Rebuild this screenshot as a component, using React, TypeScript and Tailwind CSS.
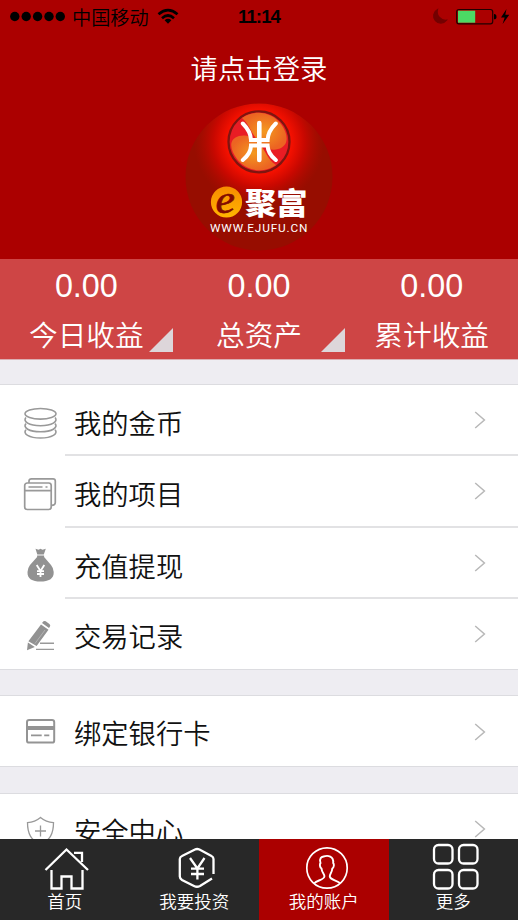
import React from "react";

const FONT = "font-['Liberation_Sans','Noto_Sans_CJK_SC',sans-serif]";

interface MenuItem {
  name: string;
  icon: React.ReactNode;
}

function StatusBar() {
  return (
    <div className="relative flex h-[34px] items-center text-black">
      <svg width="66" height="34" viewBox="0 0 66 34" className="shrink-0">
        {[14.8, 26.2, 37.6, 49, 60.3].map((x) => (
          <circle key={x} cx={x} cy="16.5" r="4.7" />
        ))}
      </svg>
      <span className="ml-[6px] pt-[3px] text-[19.2px] leading-[34px] font-[350]">{"中国移动"}</span>
      <svg width="22" height="34" viewBox="0 0 22 34" className="ml-[8px]" fill="none" stroke="#000" strokeWidth="2.7">
        <path d="M1.5 14.2Q11 6 20.5 14.2M5 18.2Q11 12.8 17 18.2" />
        <path d="M7.6 20.3Q11 17.4 14.4 20.3L11 23.8Z" fill="#000" stroke="none" />
      </svg>
      <span className="absolute inset-x-0 top-0 text-center text-[18.6px] leading-[34px] font-bold tracking-[-0.9px]">
        {"11:14"}
      </span>
      <svg width="88" height="34" viewBox="430 0 88 34" className="ml-auto">
        <path d="M437.5 9.5A7.2 7.2 0 1 0 446.6 20.2A8.5 8.5 0 0 1 437.5 9.5Z" fill="#730000" stroke="#730000" strokeWidth="1.2" />
        <rect x="456.7" y="9.5" width="36" height="14.3" rx="2.3" fill="none" stroke="#210000" strokeWidth="1.2" />
        <rect x="458" y="10.7" width="17.2" height="12" fill="#4cd964" />
        <path d="M494 14Q496.5 14 496.5 16.7Q496.5 19.3 494 19.3Z" />
        <path d="M506.5 9L501 17.4H504.7L502.6 24L509.3 14.8H505.3Z" />
      </svg>
    </div>
  );
}

function Logo() {
  return (
    <svg width="148" height="148" viewBox="0 0 148 148">
      <defs>
        <radialGradient id="glow" gradientUnits="userSpaceOnUse" cx="74" cy="39" r="65">
          <stop offset="0.4" stopColor="#ff1500" />
          <stop offset="0.5" stopColor="#f41000" />
          <stop offset="0.7" stopColor="#c80800" />
          <stop offset="1" stopColor="#b00a00" stopOpacity="0" />
        </radialGradient>
        <radialGradient id="orange">
          <stop offset="0" stopColor="#f49a20" />
          <stop offset="1" stopColor="#ec6422" />
        </radialGradient>
        <linearGradient id="coin" x1="0" y1="0" x2="0" y2="1">
          <stop offset="0" stopColor="#f88c00" />
          <stop offset="1" stopColor="#ffb400" />
        </linearGradient>
        <clipPath id="disc">
          <circle cx="74" cy="74" r="73.5" />
        </clipPath>
      </defs>
      <g clipPath="url(#disc)">
        <rect width="148" height="148" fill="#970d00" />
        <rect width="148" height="148" fill="url(#glow)" />
      </g>
      <circle cx="74" cy="38.8" r="30.5" fill="#e91c24" stroke="#7e1510" strokeWidth="2.3" />
      <path d="M57 15C70 6 87 9 96 21C104 32 104 43 93 46C86 48 80 45 75 40C66 31 65 22 57 15Z" fill="url(#orange)" />
      <path d="M91 62C78 71 61 68 52 56C44 45 44 36 54 33C62 31 69 34 74 40C81 48 82 56 91 62Z" fill="url(#orange)" />
      <g fill="none" stroke="#fff" strokeWidth="4" strokeLinecap="round">
        <path d="M74.300 20V57" strokeWidth="4.600" />
        <path d="M57.800 20.500Q65.800 28.500 66 37H82.600Q82.800 28.500 90.800 20.500" />
        <path d="M57.800 57Q65.800 50.500 66 42.600H82.600Q82.800 50.500 90.800 57" />
      </g>
      <circle cx="41.5" cy="99" r="15.600" fill="url(#coin)" />
      <text
        transform="translate(41 109.500) rotate(-4) scale(1.150 1)"
        textAnchor="middle"
        fontSize="39"
        fontStyle="italic"
        fill="#820b00"
        stroke="#820b00"
        strokeWidth="0.700"
        fontFamily="Liberation Serif, serif"
      >
        e
      </text>
      <text
        transform="translate(60 111.300) scale(1 .940)"
        fontSize="31.300"
        fontWeight="900"
        fill="#fff"
        fontFamily="Noto Sans CJK SC, sans-serif"
      >
        {"聚富"}
      </text>
      <text x="25" y="128.800" fontSize="11.800" textLength="97.500" fill="#fff" fontFamily="Roboto, sans-serif">
        WWW.EJUFU.CN
      </text>
    </svg>
  );
}

function CoinsIcon() {
  return (
    <svg width="34" height="34" viewBox="0 0 34 34" fill="none" stroke="#999" strokeWidth="1.6">
      <ellipse cx="17.500" cy="7.800" rx="15.500" ry="5.300" />
      <path d="M3 11.500C-.5 15.500 6 19.700 17.500 19.700S35.500 15.500 32 11.500M3 17.600C-.5 21.600 6 25.800 17.500 25.800S35.500 21.600 32 17.600M3 23.700C-.5 27.700 6 32 17.500 32S35.500 27.700 32 23.700" />
    </svg>
  );
}

function ProjectIcon() {
  return (
    <svg width="34" height="34" viewBox="0 0 34 34" fill="none" stroke="#999" strokeWidth="1.7">
      <rect x="1.700" y="6" width="26.500" height="26.500" rx="2.500" />
      <path d="M1.700 13.600H28M5.500 10H19.500M22.500 10H24.500M6 6V4Q6 1.800 8.500 1.800H30Q32.300 1.800 32.300 4V25.500Q32.300 28.300 28.500 28.300" />
    </svg>
  );
}

function BagIcon() {
  return (
    <svg width="34" height="34" viewBox="0 0 34 34" fill="#929292">
      <path d="M12.500 .8L15.500 1.800L17.500 .8L19.500 1.800L22.800 .8L20.800 6.500H14.300ZM14.100 7.400H21.100V9L28 17Q30.500 20 30.700 24C31 31 25.500 33.500 17.500 33.500S4.200 31 4.500 24Q4.700 20 7 17L14.100 9Z" />
      <path d="M13.700 17L17.500 23L21.300 17M17.500 23V29M14 23.200H21M14 26H21" fill="none" stroke="#fff" strokeWidth="1.800" />
    </svg>
  );
}

function PencilIcon() {
  return (
    <svg width="34" height="34" viewBox="0 0 34 34" fill="#929292">
      <path d="M18 5.500L25.500 10.800L13.600 27L5.400 22.200ZM19 4L20.500 2.300Q21.500 1.500 22.700 2.300L26.400 5Q27.800 6 27 7.500L26 9ZM4.900 23.600L11.800 28L4 31.200Z" />
      <path d="M22 11L12 24.500" stroke="#bbb" strokeWidth=".8" />
      <path d="M17 24.300H31M13 30.400H31" stroke="#999" strokeWidth="1.400" />
    </svg>
  );
}

function CardIcon() {
  return (
    <svg width="34" height="34" viewBox="0 0 34 34" fill="none" stroke="#949494">
      <rect x="4" y="3.900" width="27.200" height="22.700" rx="2.200" strokeWidth="2" />
      <path d="M4 12H31.500" strokeWidth="4" />
      <path d="M8 19.300H18.700M21.200 19.300H26.300" strokeWidth="1.800" />
    </svg>
  );
}

function ShieldIcon() {
  return (
    <svg width="34" height="34" viewBox="0 0 34 34" fill="none" stroke="#999" strokeWidth="1.300">
      <path d="M17.500 3.400Q12 8 4.500 8.600C4.500 20 8 26 17.500 30.500C27 26 30.500 20 30.500 8.600Q23 8 17.500 3.400ZM12 17H23M17.500 11.500V22.500" />
    </svg>
  );
}

function MenuRow({ item, divider }: { item: MenuItem; divider: boolean }) {
  return (
    <li className={`flex pl-[23px] ${divider ? "h-[71.3px]" : "h-[70px]"}`}>
      <span className="flex w-[42px] items-center pt-[4px]">{item.icon}</span>
      <div
        className={`flex flex-1 items-center justify-between pr-[31px] pl-[9px] ${
          divider ? "border-b-2 border-[#e2e2e4]" : ""
        }`}
      >
        <span className={`text-[27.3px] leading-[40px] font-[350] text-[#111] ${divider ? "pt-[11px]" : "pt-[8px]"}`}>
          {item.name}
        </span>
        <svg width="13" height="18" viewBox="0 0 13 18" fill="none" stroke="#b8b8b8" strokeWidth="1.500" className="mt-px">
          <path d="M1.200 1L10.400 9L1.200 17" />
        </svg>
      </div>
    </li>
  );
}

const groups: MenuItem[][] = [
  [
    { name: "我的金币", icon: <CoinsIcon /> },
    { name: "我的项目", icon: <ProjectIcon /> },
    { name: "充值提现", icon: <BagIcon /> },
    { name: "交易记录", icon: <PencilIcon /> },
  ],
  [{ name: "绑定银行卡", icon: <CardIcon /> }],
  [{ name: "安全中心", icon: <ShieldIcon /> }],
];

const stats = [
  { label: "今日收益", more: true },
  { label: "总资产", more: true },
  { label: "累计收益", more: false },
];

const tabs = [
  {
    name: "首页",
    icon: <path d="M4.500 31L25.500 10.500L47 31M33 13.800H41V23M10.500 31V49.500H20.500V37.500H30.500V49.500H41.500V31" />,
  },
  {
    name: "我要投资",
    icon: (
      <path d="M43.500 35V20Q43.500 18 41.500 17L29.500 10.500Q27 9.500 25 10.500L12 17Q9.800 18 9.800 20V37.500Q9.800 39.500 12 41L24 47Q27 48.500 30 47L42 39.500M20 19L27.400 29.500L34.500 19M27.400 29.500V40.500M21 29.700H34M21 35H34" />
    ),
  },
  {
    name: "我的账户",
    active: true,
    icon: (
      <>
        <circle cx="27" cy="29" r="20.200" strokeWidth="1.700" />
        <path d="M14 44.500C17 41 24 41 24.400 37.500C24.600 35 21.800 33.500 21.500 29.500C19.700 28.500 19.500 25 20.500 24C18.900 19 21.500 18 23.500 17.500C28 16 33.800 17 33.200 24C34.300 25 34.100 28.500 32.300 29.500C32 33.500 29.600 35 29.800 37.500C30.300 41 37 41 40.500 44.500" strokeWidth="1.900" />
      </>
    ),
  },
  {
    name: "更多",
    icon: (
      <>
        <rect x="5" y="6" width="18.500" height="18.500" rx="4.500" />
        <rect x="30" y="6" width="18.500" height="18.500" rx="4.500" />
        <rect x="5" y="31" width="18.500" height="18.500" rx="4.500" />
        <rect x="30" y="31" width="18.500" height="18.500" rx="4.500" />
      </>
    ),
  },
];

export default function App() {
  return (
    <div className={`flex h-[920px] w-[518px] flex-col overflow-hidden bg-[#eeedf2] ${FONT}`}>
      <header className="h-[259px] shrink-0 bg-[#ab0000]">
        <StatusBar />
        <h1 className="h-[69px] pt-[16px] text-center text-[27.4px] leading-[40px] font-[350] text-white">
          {"请点击登录"}
        </h1>
        <div className="flex justify-center">
          <Logo />
        </div>
      </header>

      <section className="grid h-[100.500px] shrink-0 grid-cols-3 border-b border-[#dcaeb2] bg-[#ce4545] text-white">
        {stats.map((stat) => (
          <div key={stat.label} className="relative text-center">
            <p className="pt-[7px] text-[32.300px] leading-[40px]">0.00</p>
            <p className="mt-[9px] text-[28.700px] leading-[42px] font-[350]">{stat.label}</p>
            {stat.more && (
              <svg width="24" height="24" viewBox="0 0 24 24" className="absolute right-0 bottom-[7px]">
                <path d="M24 0V24H0Z" fill="#ddd6da" />
              </svg>
            )}
          </div>
        ))}
      </section>

      <main className="flex min-h-0 flex-1 flex-col gap-[25.500px] overflow-hidden pt-[24.500px]">
        {groups.map((items) => (
          <ul key={items[0].name} className="shrink-0 border-y border-[#dcdce0] bg-white">
            {items.map((item, i) => (
              <MenuRow key={item.name} item={item} divider={i < items.length - 1} />
            ))}
          </ul>
        ))}
      </main>

      <nav className="grid h-[81px] shrink-0 grid-cols-4 bg-[#282828] text-white">
        {tabs.map((tab) => (
          <div key={tab.name} className={`flex flex-col items-center ${tab.active ? "bg-[#ab0000]" : ""}`}>
            <svg
              width="54"
              height="52"
              viewBox="0 0 54 52"
              fill="none"
              stroke="#fff"
              strokeWidth="2.300"
              className="ml-[6px] shrink-0"
            >
              {tab.icon}
            </svg>
            <span className="text-[17.500px] leading-[22px] font-[350]">{tab.name}</span>
          </div>
        ))}
      </nav>
    </div>
  );
}
